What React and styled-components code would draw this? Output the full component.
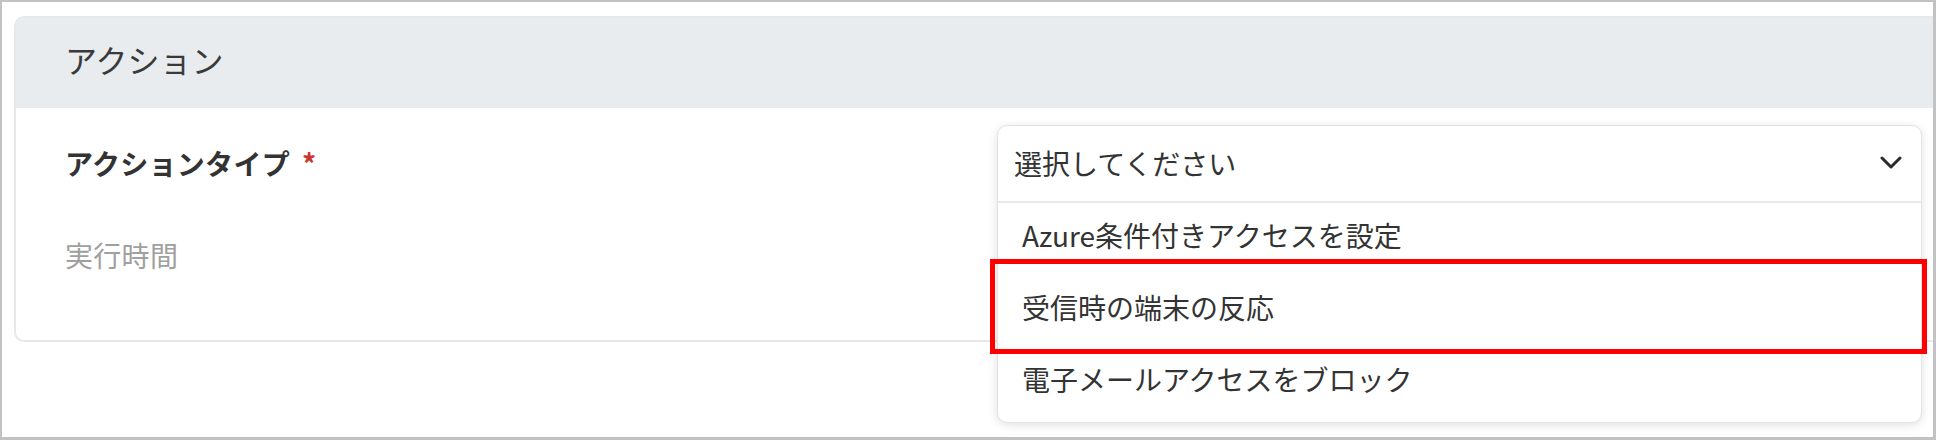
import React from "react";
import styled, { createGlobalStyle } from "styled-components";

const Global = createGlobalStyle`
  html, body { margin: 0; padding: 0; background: #ffffff; }
  body { font-family: "Noto Sans CJK JP", "Noto Sans", sans-serif; }
  * { box-sizing: border-box; }
`;

const Frame = styled.div`
  position: relative;
  width: 1936px;
  height: 440px;
  border: 2px solid #c2c2c2;
  border-right-width: 3px;
  border-bottom-width: 3px;
  background: #ffffff;
  overflow: hidden;
`;

const Card = styled.section`
  margin: 14px 0 0 12px;
  width: 1960px;
  border: 2px solid #e6e9eb;
  border-radius: 10px;
  background: #ffffff;
`;

const CardHeader = styled.header`
  height: 90px;
  display: flex;
  align-items: center;
  padding: 0 0 8px 49px;
  background: #e9ecee;
  border-radius: 8px 8px 0 0;
  font-size: 32px;
  color: #3a3a3a;
  font-weight: 400;
`;

const CardBody = styled.div`
  height: 232px;
  padding: 17px 0 0 49px;
  display: grid;
  grid-template-columns: 932px 925px;
  grid-template-rows: 78px 108px;
`;

const Label = styled.div`
  display: flex;
  align-items: center;
  padding-bottom: ${(p) => (p.$muted ? "5px" : "2px")};
  font-size: 28px;
  letter-spacing: 0.3px;
  font-weight: ${(p) => (p.$strong ? 700 : 400)};
  color: ${(p) => (p.$muted ? "#a0a0a0" : "#333333")};
`;

const Required = styled.span`
  color: #c8372d;
  margin-left: 12px;
  font-weight: 700;
`;

const Field = styled.div`
  position: relative;
`;

const Menu = styled.div`
  position: absolute;
  top: 0;
  left: 0;
  width: 925px;
  height: 298px;
  background: #ffffff;
  border: 1px solid #e3e3e3;
  border-radius: 10px;
  box-shadow: 0 2px 10px rgba(0, 0, 0, 0.12);
  z-index: 2;
  display: flex;
  flex-direction: column;
`;

const Trigger = styled.div`
  height: 77px;
  flex: none;
  display: flex;
  align-items: center;
  justify-content: space-between;
  padding: 0 19px 2px 16px;
  border-bottom: 2px solid #e8eaeb;
  font-size: 28px;
  color: #333333;
`;

const Option = styled.div`
  height: 72px;
  flex: none;
  display: flex;
  align-items: center;
  padding: 0 0 8px 24px;
  font-size: 28px;
  color: #333333;
`;

const Highlight = styled.div`
  position: absolute;
  left: 988px;
  top: 257px;
  width: 937px;
  height: 95px;
  border: 5px solid #ff0000;
  z-index: 3;
  pointer-events: none;
`;

const Chevron = () => (
  <svg width="22" height="14" viewBox="0 0 22 14" aria-hidden="true">
    <polyline
      points="2,2 11,11 20,2"
      fill="none"
      stroke="#2b2b2b"
      strokeWidth="3"
      strokeLinecap="round"
      strokeLinejoin="round"
    />
  </svg>
);

const options = [
  "Azure条件付きアクセスを設定",
  "受信時の端末の反応",
  "電子メールアクセスをブロック",
];

export default function App() {
  return (
    <>
      <Global />
      <Frame>
        <Card>
          <CardHeader>アクション</CardHeader>
          <CardBody>
            <Label $strong>
              アクションタイプ<Required>*</Required>
            </Label>
            <Field>
              <Menu>
                <Trigger>
                  <span>選択してください</span>
                  <Chevron />
                </Trigger>
                {options.map((o) => (
                  <Option key={o}>{o}</Option>
                ))}
              </Menu>
            </Field>
            <Label $muted>実行時間</Label>
          </CardBody>
        </Card>
        <Highlight />
      </Frame>
    </>
  );
}
